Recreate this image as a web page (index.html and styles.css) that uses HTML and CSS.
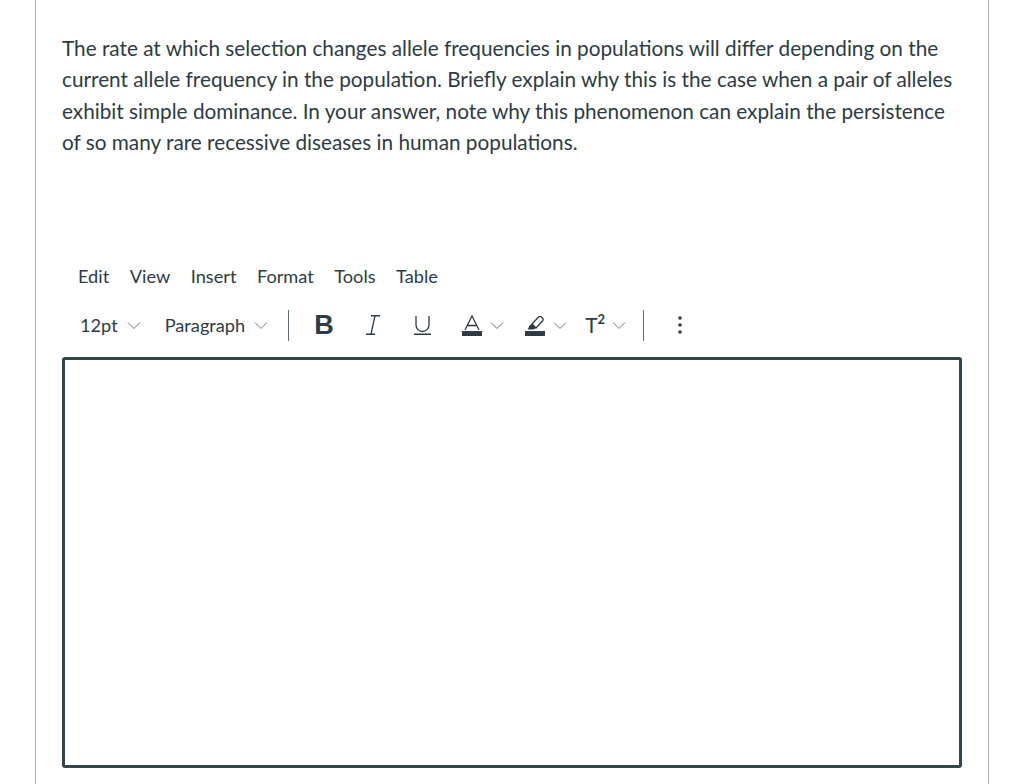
FILE: index.html
```html
<!DOCTYPE html>
<html lang="en">
<head>
<meta charset="utf-8">
<title>Question</title>
<link rel="stylesheet" href="styles.css">
</head>
<body>
<main class="card">
  <p class="question">The rate at which selection changes allele frequencies in populations will differ depending on the current allele frequency in the population. Briefly explain why this is the case when a pair of alleles exhibit simple dominance. In your answer, note why this phenomenon can explain the persistence of so many rare recessive diseases in human populations.</p>
  <nav class="menubar">
    <span class="menu-item">Edit</span>
    <span class="menu-item">View</span>
    <span class="menu-item">Insert</span>
    <span class="menu-item">Format</span>
    <span class="menu-item">Tools</span>
    <span class="menu-item">Table</span>
  </nav>
  <div class="toolbar">
    <span class="select size-select">12pt<svg class="chev" viewBox="0 0 14 7"><path d="M1 .5l6 6 6-6"/></svg></span>
    <span class="select para-select">Paragraph<svg class="chev" viewBox="0 0 14 7"><path d="M1 .5l6 6 6-6"/></svg></span>
    <span class="sep sep-a"></span>
    <span class="bold">B</span>
    <svg class="tool-icon italic" viewBox="0 0 14 20"><path d="M5 .75h9M9 .75L5 19.250M0 19.250h9"/></svg>
    <svg class="tool-icon under" viewBox="0 0 17 20"><path d="M2 1v9a6.500 6.500 0 0 0 13 0V1M0 19.250h17"/></svg>
    <span class="split color-split">
      <svg class="tool-icon color" viewBox="0 0 20 21"><path d="M3 15L10 1l7 14M5.500 10.500h9"/><rect class="solid" x="0" y="16" width="20" height="5"/></svg>
      <svg class="chev" viewBox="0 0 14 7"><path d="M1 .5l6 6 6-6"/></svg>
    </span>
    <span class="split mark-split">
      <svg class="tool-icon mark" viewBox="0 0 20 21"><path d="M7 9l6.500-7c1-.8 2-.8 2.800 0l1.200 1.200c.8.800.8 1.800 0 2.800L11 13z"/><path class="solid" d="M7 9l4 4-2.500 1.500H2.500l1-1.500.5-2z"/><rect class="solid" x="0" y="16" width="20" height="5"/></svg>
      <svg class="chev" viewBox="0 0 14 7"><path d="M1 .5l6 6 6-6"/></svg>
    </span>
    <span class="split sup-split">
      <span class="sup-label">T<sup class="sup">2</sup></span>
      <svg class="chev" viewBox="0 0 14 7"><path d="M1 .5l6 6 6-6"/></svg>
    </span>
    <span class="sep sep-b"></span>
    <svg class="more" viewBox="0 0 4 18"><circle cx="2" cy="2" r="1.800"/><circle cx="2" cy="9" r="1.800"/><circle cx="2" cy="16" r="1.800"/></svg>
  </div>
  <div class="editor"></div>
</main>
</body>
</html>
```
FILE: styles.css
```css
html, body {
  margin: 0;
  height: 784px;
  overflow: hidden;
  background: #fff;
}
body {
  font-family: Lato, "Open Sans", sans-serif;
  color: #2d3b45;
}
.card {
  box-sizing: border-box;
  width: 954px;
  height: 784px;
  margin-left: 35px;
  padding: 33px 26px 0;
  border-left: 1px solid #b4b4b4;
  border-right: 1px solid #b4b4b4;
}
.question {
  margin: 0;
  font-size: 20.75px;
  line-height: 31.25px;
  width: 900px;
}
.menubar {
  display: flex;
  gap: 20.500px;
  margin-top: 106px;
  padding-left: 16px;
  font-size: 18.200px;
  line-height: 24px;
}
.toolbar {
  display: flex;
  align-items: center;
  height: 36px;
  margin-top: 19px;
  padding-left: 18px;
  font-size: 18.200px;
}
.select {
  display: flex;
  align-items: center;
}
.chev {
  width: 14px;
  height: 7px;
  fill: none;
  stroke: #6b7780;
  stroke-width: 1;
  flex: none;
}
.size-select .chev, .para-select .chev { margin-left: 9px; }
.para-select { margin-left: 24px; }
.sep {
  display: block;
  width: 1px;
  height: 31px;
  background: #5d6a74;
}
.sep-a { margin-left: 19.500px; }
.bold {
  margin-left: 25.500px;
  font-size: 27px;
  font-weight: 700;
  font-family: "Liberation Sans", sans-serif;
  line-height: 1;
}
.tool-icon {
  display: block;
  fill: none;
  stroke: #2d3b45;
  stroke-width: 1.300;
  flex: none;
}
.solid { fill: #2d3b45; stroke: none; }
.italic { width: 14px; height: 20px; margin-left: 32px; }
.under { width: 17px; height: 20px; margin-left: 34px; }
.split { display: flex; align-items: center; }
.split .tool-icon { width: 20px; height: 21px; }
.split .chev { margin-left: 8px; }
.color-split { margin-left: 31px; }
.mark-split { margin-left: 21px; }
.sup-split { margin-left: 18.500px; }
.sup-split .chev { margin-left: 7px; }
.sup-label {
  font-size: 21px;
  line-height: 24px;
}
.sup {
  font-size: 13px;
  font-weight: 700;
  line-height: 0;
  vertical-align: 9px;
}
.sep-b { margin-left: 16.500px; }
.more {
  width: 4px;
  height: 18px;
  margin-left: 34px;
  fill: #2d3b45;
  flex: none;
}
.editor {
  box-sizing: border-box;
  height: 411px;
  margin-top: 14px;
  border: 3px solid #36444e;
  border-radius: 3px;
  width: 900px;
}
```
